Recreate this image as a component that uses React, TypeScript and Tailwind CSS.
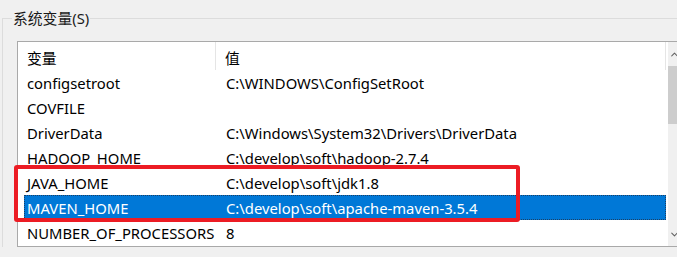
import { ChevronUp, ChevronDown } from 'lucide-react';

const rows = [
  { name: 'configsetroot', value: 'C:\\WINDOWS\\ConfigSetRoot' },
  { name: 'COVFILE', value: '' },
  { name: 'DriverData', value: 'C:\\Windows\\System32\\Drivers\\DriverData' },
  { name: 'HADOOP_HOME', value: 'C:\\develop\\soft\\hadoop-2.7.4' },
  { name: 'JAVA_HOME', value: 'C:\\develop\\soft\\jdk1.8' },
  { name: 'MAVEN_HOME', value: 'C:\\develop\\soft\\apache-maven-3.5.4', selected: true },
  { name: 'NUMBER_OF_PROCESSORS', value: '8' },
];

export default function App() {
  return (
    <div
      className="relative h-[257px] w-[677px] overflow-hidden bg-[#f0f0f0] text-[14.8px] text-black"
      style={{ fontFamily: '"Noto Sans", "Noto Sans CJK SC", sans-serif' }}
    >
      <fieldset className="ml-[2px] mt-[8px] w-[700px] border-l border-t border-[#dcdcdc] pl-[8px] pt-[12px]">
        <legend className="ml-[1px] px-[1px] leading-[20px] text-[#1a1a1a]">系统变量(S)</legend>

        <div className="ml-[6px] mt-[1px] flex h-[206px] w-[700px] border-b border-l border-t border-[#a9a9a9] bg-white">
          <div className="w-[648px] pl-[6px]">
            {/* header */}
            <div className="flex h-[28px] items-center">
              <div className="flex h-full w-[192px] items-center border-r border-[#e5e5e5] pl-[3px] pt-[4px]">变量</div>
              <div className="flex h-full flex-1 items-center border-r border-[#e5e5e5] pl-[9px] pt-[4px]">值</div>
            </div>
            {rows.map((r) => (
              <div
                key={r.name}
                className={
                  'flex h-[25px] items-center pt-[2px] ' +
                  (r.selected ? 'bg-[#0078d7] text-white outline-1 -outline-offset-1 outline-dotted outline-[#1c3f63]' : '')
                }
              >
                <div className="w-[192px] whitespace-nowrap pl-[3px]">{r.name}</div>
                <div className="flex-1 whitespace-nowrap pl-[10px]">{r.value}</div>
              </div>
            ))}
          </div>

          {/* scrollbar */}
          <div className="ml-[2px] flex w-[17px] flex-col bg-[#f0f0f0]">
            <div className="flex h-[24px] items-center justify-center pr-[4px]">
              <ChevronUp size={11} strokeWidth={2.2} color="#606060" />
            </div>
            <div className="h-[58px] bg-[#cdcdcd]" />
            <div className="flex-1" />
            <div className="flex h-[24px] items-center justify-center pr-[4px]">
              <ChevronDown size={11} strokeWidth={2.2} color="#606060" />
            </div>
          </div>
        </div>
      </fieldset>

      {/* red annotation box */}
      <div className="absolute left-[14px] top-[165px] h-[57px] w-[506px] rounded-[3px] border-4 border-[#ec1c24]" />
    </div>
  );
}
